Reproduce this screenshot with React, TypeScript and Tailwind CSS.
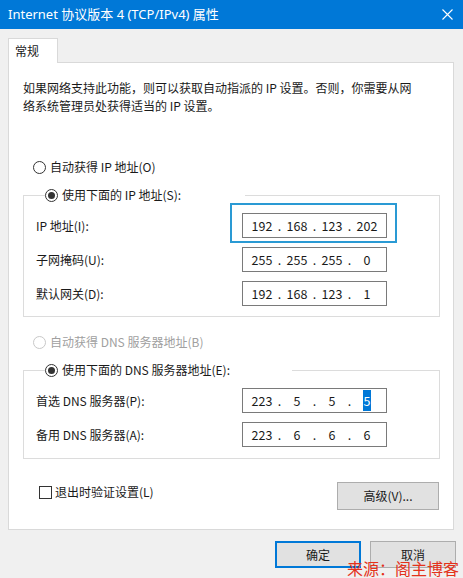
import React from "react";

const font = { fontFamily: '"Noto Sans CJK SC", "Noto Sans", sans-serif' };

function Radio({ checked, disabled }: { checked?: boolean; disabled?: boolean }) {
  return (
    <span
      className={`w-[13px] h-[13px] rounded-full border flex items-center justify-center bg-white shrink-0 ${
        disabled ? "border-[#c8c8c8]" : "border-[#333333]"
      }`}
    >
      {checked && <span className="w-[7px] h-[7px] rounded-full bg-[#333333]" />}
    </span>
  );
}

function IpBox({ parts, highlightLast, ring }: { parts: string[]; highlightLast?: boolean; ring?: boolean }) {
  return (
    <div className="relative w-[145px] h-[25px] border border-[#7a7a7a] bg-white flex items-center pl-[5px] text-[12.5px] text-[#1a1a1a]">
      {ring && (
        <div className="absolute left-[-13px] top-[-11px] w-[167px] h-[40px] border-[2px] border-[#2a9ad4]" />
      )}
      {parts.map((p, i) => (
        <React.Fragment key={i}>
          <span className="w-[28px] text-center leading-[16px]">
            {highlightLast && i === 3 ? (
              <span className="bg-[#0078d7] text-white px-[1px] py-[1px]">{p}</span>
            ) : (
              p
            )}
          </span>
          {i < 3 && <span className="w-[7px] text-center leading-[16px]">.</span>}
        </React.Fragment>
      ))}
    </div>
  );
}

function Row({ label, children }: { label: string; children: React.ReactNode }) {
  return (
    <div className="flex items-center">
      <div className="w-[206px] text-[12px]">{label}</div>
      {children}
    </div>
  );
}

export default function App() {
  return (
    <div className="w-[463px] h-[578px] bg-[#f0f0f0] flex flex-col relative overflow-hidden text-[#1a1a1a]" style={font}>
      {/* Title bar */}
      <div className="h-[29px] bg-[#0078d7] flex items-center justify-between pl-[8px] pr-[9px] text-white">
        <span className="text-[13px] leading-none" style={{ fontFamily: '"Noto Sans", "Noto Sans CJK SC", sans-serif' }}>
          Internet 协议版本 4 (TCP/IPv4) 属性
        </span>
        <svg width="11" height="11" viewBox="0 0 11 11" className="mr-[1px]">
          <path d="M0.5 0.5 L10.5 10.5 M10.5 0.5 L0.5 10.5" stroke="white" strokeWidth="1.1" />
        </svg>
      </div>

      {/* Tab */}
      <div className="mt-[9px] ml-[8px] flex">
        <div className="w-[50px] h-[25px] bg-white border border-b-0 border-[#d9d9d9] pl-[6px] pt-[3px] text-[12px] leading-[18px] relative z-10 -mb-px">
          常规
        </div>
      </div>

      {/* Panel */}
      <div className="ml-[8px] w-[446px] h-[468px] bg-white border border-[#d9d9d9] flex flex-col text-[12px]">
        <div className="mt-[16px] ml-[14px] leading-[18px]">
          如果网络支持此功能，则可以获取自动指派的 IP 设置。否则，你需要从网
          <br />
          络系统管理员处获得适当的 IP 设置。
        </div>

        <div className="mt-[43px] ml-[24px] flex items-center gap-[4px] h-[18px]">
          <Radio />
          <span>自动获得 IP 地址(O)</span>
        </div>

        <fieldset className="mt-[10px] ml-[14px] w-[417px] border border-[#dcdcdc] pl-[12px] pb-[10px]">
          <legend className="ml-[9px] w-[200px] h-[18px] bg-white">
            <span className="flex items-center gap-[4px] h-[18px]">
              <Radio checked />
              <span>使用下面的 IP 地址(S):</span>
            </span>
          </legend>
          <div className="flex flex-col gap-[9px] pt-[9px]">
            <Row label="IP 地址(I):">
              <IpBox parts={["192", "168", "123", "202"]} ring />
            </Row>
            <Row label="子网掩码(U):">
              <IpBox parts={["255", "255", "255", "0"]} />
            </Row>
            <Row label="默认网关(D):">
              <IpBox parts={["192", "168", "123", "1"]} />
            </Row>
          </div>
        </fieldset>

        <div className="mt-[16px] ml-[24px] flex items-center gap-[4px] h-[18px] text-[#a0a0a0]">
          <Radio disabled />
          <span>自动获得 DNS 服务器地址(B)</span>
        </div>

        <fieldset className="mt-[10px] ml-[14px] w-[417px] border border-[#dcdcdc] pl-[12px] pb-[11px]">
          <legend className="ml-[9px] w-[247px] h-[18px] bg-white">
            <span className="flex items-center gap-[4px] h-[18px]">
              <Radio checked />
              <span>使用下面的 DNS 服务器地址(E):</span>
            </span>
          </legend>
          <div className="flex flex-col gap-[9px] pt-[9px]">
            <Row label="首选 DNS 服务器(P):">
              <IpBox parts={["223", "5", "5", "5"]} highlightLast />
            </Row>
            <Row label="备用 DNS 服务器(A):">
              <IpBox parts={["223", "6", "6", "6"]} />
            </Row>
          </div>
        </fieldset>

        <div className="mt-[23px] flex items-start justify-between pl-[30px] pr-[14px]">
          <div className="flex items-center gap-[3px] mt-[1px]">
            <span className="w-[13px] h-[13px] border border-[#333333] bg-white" />
            <span>退出时验证设置(L)</span>
          </div>
          <button className="w-[102px] h-[28px] bg-[#e1e1e1] border border-[#adadad] text-[12px]">高级(V)...</button>
        </div>
      </div>

      {/* Bottom buttons */}
      <div className="mt-[11px] flex justify-end gap-[9px] pr-[7px]">
        <button className="w-[86px] h-[27px] bg-[#e1e1e1] border-[2px] border-[#0078d7] text-[12px]">确定</button>
        <button className="w-[86px] h-[27px] bg-[#e1e1e1] border border-[#adadad] text-[12px]">取消</button>
      </div>

      {/* Watermark overlay */}
      <div className="absolute left-[347px] top-[558px] text-[16px] leading-[20px] text-[#e4321b] tracking-[0px] whitespace-nowrap">
        来源：阁主博客
      </div>
    </div>
  );
}
